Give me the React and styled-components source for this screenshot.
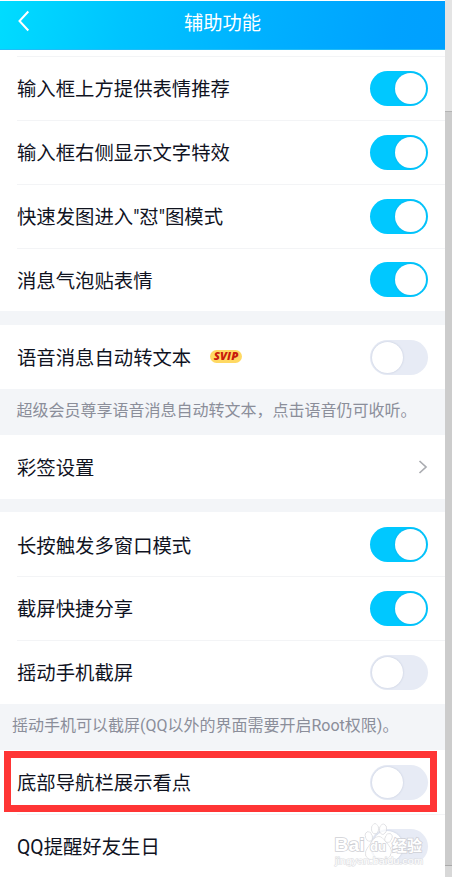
import React from "react";
import styled, { createGlobalStyle } from "styled-components";

const Global = createGlobalStyle`
  * { box-sizing: border-box; }
  body { margin: 0; background: #fff; overflow: hidden; }
`;
const Page = styled.div`
  width: 452px;
  height: 877px;
  overflow: hidden;
  display: grid;
  grid-template-columns: 445px 7px;
  font-family: Roboto, "Noto Sans CJK SC", sans-serif;
`;
const Screen = styled.main`
  position: relative;
  padding-top: 1px;
  height: 877px;
  overflow: hidden;
  background: #fff;
`;
const Header = styled.header`
  height: 49px;
  display: grid;
  grid-template-columns: 60px 1fr 60px;
  background: linear-gradient(100deg, #00dcff 0%, #00c4ff 28%, #00b0ff 60%, #00a2ff 88%, #00a0ff 100%);
  border-bottom: 1px solid #22bcf6;
`;
const BackIcon = styled.svg`
  width: 20px;
  height: 24px;
  margin: 8px 0 0 14px;
  fill: none;
  stroke: #fff;
  stroke-width: 2;
`;
const Title = styled.h1`
  margin: 0;
  text-align: center;
  color: #fff;
  font-size: 19.3px;
  font-weight: 400;
  line-height: 45px;
`;
const List = styled.section`
  padding-top: ${(p) => p.$top || 0}px;
`;
const Row = styled.div`
  height: 63.85px;
  margin-left: 17px;
  padding-right: 17px;
  display: flex;
  align-items: center;
  border-top: 1px solid ${(p) => (p.$line ? "#f3f4f6" : "transparent")};
`;
const Label = styled.span`
  font-size: 19.37px;
  line-height: 28px;
  color: #10131f;
  white-space: nowrap;
  flex: 1;
  display: flex;
  align-items: center;
  padding-top: 3.7px;
`;
const Gap = styled.div`
  height: 13.6px;
  background: #f3f5f8;
`;
const Note = styled.p`
  margin: 0;
  height: ${(p) => p.$height}px;
  padding-left: ${(p) => p.$left}px;
  background: #f3f5f8;
  color: #8b8e9a;
  font-size: 16px;
  line-height: 43px;
  white-space: nowrap;
`;
const Track = styled.span`
  width: 58px;
  height: 35px;
  padding: 2px;
  border-radius: 18px;
  display: flex;
  justify-content: ${(p) => (p.$on ? "flex-end" : "flex-start")};
  background: ${(p) => (p.$on ? "#00c8ff" : "#e7ebf5")};
`;
const Knob = styled.span`
  width: 31px;
  height: 31px;
  border-radius: 50%;
  background: #fff;
  box-shadow: 0 0 2px rgba(60, 80, 130, 0.25);
`;
const Badge = styled.svg`
  width: 34px;
  height: 16px;
  margin-left: 18px;
  margin-top: -6px;
`;
const Chevron = styled.svg`
  width: 10px;
  height: 14px;
  fill: none;
  stroke: #aaacb1;
  stroke-width: 1.7;
`;
const Highlight = styled.div`
  position: absolute;
  left: 4px;
  top: 751px;
  width: 433px;
  height: 61px;
  border: 7px solid #ff3535;
`;
const Watermark = styled.svg`
  position: absolute;
  left: 330px;
  top: 820px;
  width: 98px;
  height: 48px;
`;
const Edge = styled.aside`
  display: grid;
  grid-template-rows: 112px 754px 11px;
  background: #cacaca;
`;
const EdgePart = styled.div`
  background: ${(p) => p.$tone};
  border-bottom: 1px solid ${(p) => p.$line || p.$tone};
`;

function Toggle({ on }) {
  return <Track $on={on}><Knob /></Track>;
}
function Setting({ text, on, line, badge }) {
  return (
    <Row $line={line}>
      <Label>
        {text}
        {badge && (
          <Badge viewBox="0 0 34 16">
            <rect x="1" y="2" width="32" height="13" rx="6.5" fill="#ffd963" />
            <text x="4.8" y="11.9" fontFamily="Open Sans" fontSize="9.6" fontWeight="800" fontStyle="italic" fill="#c91c0c" textLength="24.5" lengthAdjust="spacingAndGlyphs">SVIP</text>
          </Badge>
        )}
      </Label>
      <Toggle on={on} />
    </Row>
  );
}

export default function App() {
  return (
    <>
      <Global />
      <Page>
        <Screen>
          <Header>
            <BackIcon viewBox="0 0 20 24"><path d="M14.3 2.5 L5.5 12 L14.3 21.5" /></BackIcon>
            <Title>辅助功能</Title>
          </Header>
          <List $top={6}>
            <Setting text="输入框上方提供表情推荐" on line />
            <Setting text="输入框右侧显示文字特效" on line />
            <Setting text={'快速发图进入"怼"图模式'} on line />
            <Setting text="消息气泡贴表情" on line />
          </List>
          <Gap />
          <List>
            <Setting text="语音消息自动转文本" badge />
          </List>
          <Note $left={16.5} $height={46}>超级会员尊享语音消息自动转文本，点击语音仍可收听。</Note>
          <List>
            <Row>
              <Label>彩签设置</Label>
              <Chevron viewBox="0 0 10 14"><path d="M1.5 1 L8 7 L1.5 13" /></Chevron>
            </Row>
          </List>
          <Gap />
          <List>
            <Setting text="长按触发多窗口模式" on />
            <Setting text="截屏快捷分享" on line />
            <Setting text="摇动手机截屏" line />
          </List>
          <Note $left={12} $height={46}>摇动手机可以截屏(QQ以外的界面需要开启Root权限)。</Note>
          <List>
            <Setting text="底部导航栏展示看点" />
            <Setting text="QQ提醒好友生日" line />
          </List>
          <Highlight />
          <Watermark viewBox="0 0 98 48">
            <g fill="#fff" stroke="#cfd0d5" strokeWidth="0.9" paintOrder="stroke">
              <g fillOpacity="0.7">
                <ellipse cx="38.8" cy="16.5" rx="3.3" ry="4.7" transform="rotate(-15 38.8 16.5)" />
                <ellipse cx="45" cy="8.8" rx="3.4" ry="5" />
                <ellipse cx="53" cy="9.2" rx="3.4" ry="5" transform="rotate(8 53 9.2)" />
                <ellipse cx="58.5" cy="18" rx="3.2" ry="4.5" transform="rotate(20 58.5 18)" />
                <path d="M42 21 Q49 12 55 21 C59 26 63 29 60 36 C57 41 51 38 48 38 C43 39 39 41 36 36 C34 30 40 26 42 21Z" />
              </g>
              <g fontFamily="Liberation Sans" fontWeight="700" strokeWidth="1.5">
                <text x="4.5" y="31" fontSize="18" textLength="30" lengthAdjust="spacingAndGlyphs">Bai</text>
                <text x="40" y="31" fontSize="13" textLength="16">du</text>
                <text x="62" y="31" fontSize="15" fontFamily="Noto Sans CJK SC" textLength="30">经验</text>
                <text x="5" y="44" fontSize="9" fontWeight="400" strokeWidth="1" stroke="#dcdde1" textLength="88" lengthAdjust="spacingAndGlyphs">jingyan.baidu.com</text>
              </g>
            </g>
          </Watermark>
        </Screen>
        <Edge>
          <EdgePart $tone="#e4e4e4" $line="#b4b4b4" />
          <EdgePart $tone="#cccccc" $line="#aaa" />
          <EdgePart $tone="#d8d8d8" />
        </Edge>
      </Page>
    </>
  );
}
